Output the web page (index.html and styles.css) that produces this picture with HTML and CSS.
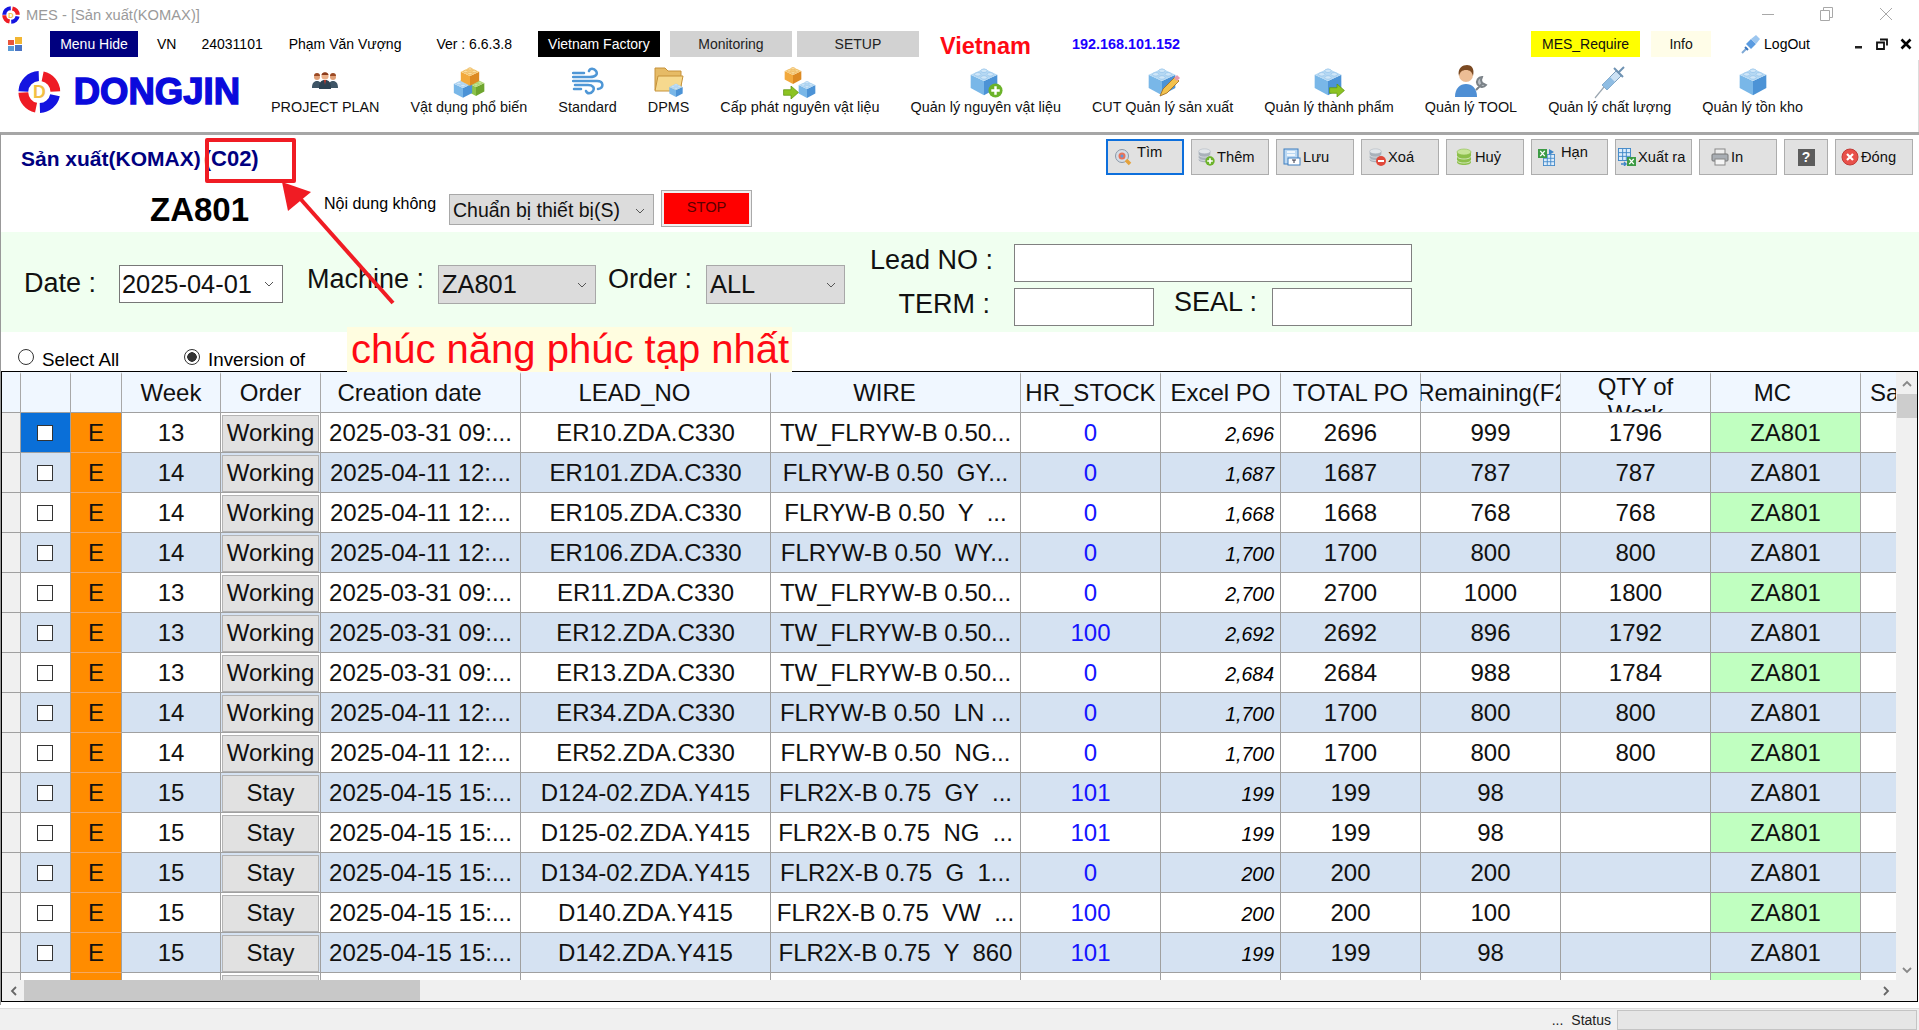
FILE: index.html
```html
<!DOCTYPE html>
<html lang="vi">
<head>
<meta charset="utf-8">
<title>MES - [Sản xuất(KOMAX)]</title>
<link rel="stylesheet" href="styles.css">
</head>
<body>
<svg class="defs" width="0" height="0" aria-hidden="true">
  <defs>
    <symbol id="blk" viewBox="0 0 36 36">
      <polygon class="bl" points="3,11 18,18 18,34 3,26"/>
      <polygon class="br" points="18,18 33,11 33,26 18,34"/>
      <polygon class="bt" points="18,4 33,11 18,18 3,11"/>
      <ellipse class="bs" cx="18" cy="6.5" rx="3.6" ry="2"/>
      <ellipse class="bs" cx="11" cy="10.5" rx="3.6" ry="2"/>
      <ellipse class="bs" cx="25" cy="10.5" rx="3.6" ry="2"/>
      <ellipse class="bs" cx="18" cy="14" rx="3.6" ry="2"/>
    </symbol>
    <symbol id="logo" viewBox="0 0 48 48">
      <path d="M6 23.4A18 18 0 0 1 23.4 6" fill="none" stroke="#1414e0" stroke-width="11"/>
      <path d="M27.7 6.4A18 18 0 0 1 42 23.4" fill="none" stroke="#ee1c25" stroke-width="11"/>
      <path d="M41.6 27.7A18 18 0 0 1 24.6 42" fill="none" stroke="#1414e0" stroke-width="11"/>
      <path d="M20.3 41.6A18 18 0 0 1 6 24.6" fill="none" stroke="#ee1c25" stroke-width="11"/>
      <text x="24" y="31" text-anchor="middle" class="logo-d">D</text>
    </symbol>
    <symbol id="cyl" viewBox="0 0 18 18">
      <path class="cb" d="M2 4v10c0 1.8 3 3 7 3s7-1.200 7-3V4z"/>
      <ellipse class="ct" cx="9" cy="4" rx="7" ry="3"/>
      <path d="M2 8c0 1.800 3 3 7 3s7-1.200 7-3M2 12c0 1.800 3 3 7 3s7-1.200 7-3" fill="none" stroke="#fff" stroke-opacity=".6"/>
    </symbol>
    <symbol id="plus" viewBox="0 0 16 16">
      <circle cx="8" cy="8" r="7.5" fill="#6cb32a"/>
      <path d="M8 3.500v9M3.500 8h9" stroke="#fff" stroke-width="2.600"/>
    </symbol>
    <symbol id="arrow" viewBox="0 0 16 14">
      <polygon points="0,4 8,4 8,0 16,7 8,14 8,10 0,10" fill="#8cc322" stroke="#5e9412" stroke-width=".8"/>
    </symbol>
    <symbol id="grid" viewBox="0 0 14 14">
      <rect x=".5" y=".5" width="13" height="13" fill="#dcecfb" stroke="#3e86c8"/>
      <path d="M5 1v12M9 1v12M1 5h12M1 9h12" stroke="#3e86c8"/>
    </symbol>
    <symbol id="xls" viewBox="0 0 12 12">
      <rect width="12" height="12" fill="#3d9b45"/>
      <path d="M3 2.500l6 7M9 2.500l-6 7" stroke="#fff" stroke-width="1.800"/>
    </symbol>
  </defs>
</svg>

<header class="titlebar">
  <svg class="title-logo" width="18" height="18"><use href="#logo"/></svg>
  <span class="title-text">MES - [Sản xuất(KOMAX)]</span>
  <div class="winctl">
    <svg width="14" height="14" viewBox="0 0 14 14"><path d="M1 7.500h12" stroke="#a8a8a8"/></svg>
    <svg width="14" height="14" viewBox="0 0 14 14"><path d="M.5 3.500h9v10h-9zM3.500 3.500v-3h9v10h-3" fill="none" stroke="#a8a8a8"/></svg>
    <svg width="14" height="14" viewBox="0 0 14 14"><path d="M1 1l12 12M13 1L1 13" stroke="#a8a8a8"/></svg>
  </div>
</header>

<nav class="menubar">
  <svg class="app-ico" width="14" height="14" viewBox="0 0 14 14">
    <rect x="0" y="3" width="6" height="5" fill="#e8543a"/><rect x="7" y="0" width="7" height="7" fill="#f2b632"/>
    <rect x="0" y="9" width="6" height="5" fill="#5b9bd5"/><rect x="7" y="8" width="7" height="6" fill="#4a74c4"/>
  </svg>
  <span class="tag tag-navy">Menu Hide</span>
  <span class="info ml19">VN</span>
  <span class="info ml25">24031101</span>
  <span class="info ml26">Phạm Văn Vượng</span>
  <span class="info ml35">Ver : 6.6.3.8</span>
  <span class="tag tag-black ml26">Vietnam Factory</span>
  <span class="tag tag-gray ml10">Monitoring</span>
  <span class="tag tag-gray ml5">SETUP</span>
  <span class="country">Vietnam</span>
  <span class="ip">192.168.101.152</span>
  <span class="tag tag-yellow">MES_Require</span>
  <span class="tag tag-cream">Info</span>
  <svg class="logout-ico" width="20" height="20" viewBox="0 0 20 20">
    <path d="M1 19l5-5" stroke="#7fa9d6" stroke-width="2"/><path d="M5 10l5-5 5 5-5 5z" fill="#5a9be0"/>
    <path d="M10 5l5-4 4 4-4 5z" fill="#9cc6ef"/><path d="M4 13l3 3" stroke="#3d78bd" stroke-width="2"/>
  </svg>
  <span class="info logout">LogOut</span>
  <div class="miniwin">
    <svg width="10" height="10" viewBox="0 0 10 10"><rect x="1" y="7" width="7" height="2.500" fill="#222"/></svg>
    <svg width="12" height="12" viewBox="0 0 12 12"><path d="M1 4.500h7v6.500H1zM4 1.500h7v6" fill="none" stroke="#111" stroke-width="1.800"/></svg>
    <svg width="12" height="12" viewBox="0 0 12 12"><path d="M1.500 1.500l9 9M10.500 1.500l-9 9" stroke="#000" stroke-width="2.600"/></svg>
  </div>
</nav>

<section class="iconbar">
  <div class="brand">
    <svg width="48" height="48"><use href="#logo"/></svg>
    <span class="brand-name">DONGJIN</span>
  </div>
  <div class="tool"><div class="tool-ico">
    <svg width="26" height="24" viewBox="0 0 26 24" class="people">
      <path d="M0 22c0-5 2-7 5-7s5 2 5 7zM16 22c0-5 2-7 5-7s5 2 5 7z" fill="#3f5566"/>
      <circle cx="5" cy="11" r="3" fill="#e0a078"/><circle cx="21" cy="11" r="3" fill="#e0a078"/>
      <path d="M7 23c0-7 2-9 6-9s6 2 6 9z" fill="#2d4252"/><path d="M12 14h2l-1 5z" fill="#c0392b"/>
      <circle cx="13" cy="10" r="3.600" fill="#eab08a"/><path d="M9.500 9a3.600 3.600 0 0 1 7 0z" fill="#8a3b1c"/>
      <path d="M2 10a3 3 0 0 1 6 0zM18 10a3 3 0 0 1 6 0z" fill="#9c4a24"/>
    </svg></div><span>PROJECT PLAN</span></div>
  <div class="tool"><div class="tool-ico">
    <svg width="34" height="34" viewBox="0 0 34 34">
      <use href="#blk" class="c-green" x="14" y="12" width="20" height="20"/>
      <use href="#blk" x="0" y="12" width="22" height="22"/>
      <use href="#blk" class="c-orange" x="7" y="0" width="22" height="22"/>
    </svg></div><span>Vật dụng phổ biến</span></div>
  <div class="tool"><div class="tool-ico">
    <svg width="32" height="32" viewBox="0 0 32 32" fill="none" stroke="#4f97d6" stroke-width="2.500" stroke-linecap="round">
      <path d="M1 11h17c6 0 8-3 6-6s-6-3-7 0"/><path d="M1 15h24c7 0 7 7 1 8"/><path d="M3 19h13c5 0 7 3 5 6s-6 3-7 0"/><path d="M1 7h11M2 23h7"/>
    </svg></div><span>Standard</span></div>
  <div class="tool"><div class="tool-ico">
    <svg width="30" height="34" viewBox="0 0 30 34">
      <path d="M1 3h10l3 3h13v19H1z" fill="#e6bb66" stroke="#c6923a"/>
      <path d="M1 26l3-15h25l-3 15z" fill="#f6d98e" stroke="#c6923a"/>
      <use href="#blk" x="14" y="17" width="16" height="16"/>
    </svg></div><span>DPMS</span></div>
  <div class="tool"><div class="tool-ico">
    <svg width="34" height="34" viewBox="0 0 34 34">
      <use href="#blk" class="c-orange" x="0" y="0" width="20" height="20"/>
      <use href="#blk" x="14" y="14" width="20" height="20"/>
      <use href="#arrow" x="0" y="21" width="16" height="13"/>
    </svg></div><span>Cấp phát nguyên vật liệu</span></div>
  <div class="tool"><div class="tool-ico">
    <svg width="36" height="34" viewBox="0 0 36 34">
      <use href="#blk" x="0" y="0" width="32" height="32"/>
      <use href="#plus" x="20" y="18" width="15" height="15"/>
    </svg></div><span>Quản lý nguyên vật liệu</span></div>
  <div class="tool"><div class="tool-ico">
    <svg width="34" height="34" viewBox="0 0 34 34">
      <use href="#blk" x="0" y="0" width="32" height="32"/>
      <path d="M14 31l3-7 12-12 4 4-12 12z" fill="#f3c24d" stroke="#a06a20" stroke-width=".8"/>
      <path d="M28 13l3-3 3 3-3 3z" fill="#e79ab0"/>
    </svg></div><span>CUT Quản lý sản xuất</span></div>
  <div class="tool"><div class="tool-ico">
    <svg width="34" height="34" viewBox="0 0 34 34">
      <use href="#blk" x="0" y="0" width="32" height="32"/>
      <use href="#arrow" x="17" y="19" width="16" height="13"/>
    </svg></div><span>Quản lý thành phẩm</span></div>
  <div class="tool"><div class="tool-ico">
    <svg width="34" height="34" viewBox="0 0 34 34">
      <path d="M1 32c0-9 5-13 11-13s11 4 11 13z" fill="#4f8fd4"/>
      <circle cx="12" cy="10" r="7" fill="#ecbd95"/><path d="M5 11C3 3 9 0 13 0s8 3 6 11c-1-4-3-6-7-6s-6 2-7 6z" fill="#7b4a22"/>
      <path d="M22 25l7-7M28 12a5 5 0 1 0 4 8l-4-2-1-3z" fill="#b9bfc5" stroke="#7b8288" stroke-width="2"/>
    </svg></div><span>Quản lý TOOL</span></div>
  <div class="tool"><div class="tool-ico">
    <svg width="32" height="34" viewBox="0 0 32 34">
      <path d="M1 33l9-11" stroke="#9aa6b0" stroke-width="1.200"/>
      <path d="M8 20L22 6l5 5-14 14z" fill="#cde2f4" stroke="#7e9fbc"/>
      <path d="M8 20l8-8 5 5-8 8z" fill="#8fbde3"/>
      <path d="M20 3l9 9M25 7l5-5" stroke="#6f93b3" stroke-width="2"/>
    </svg></div><span>Quản lý chất lượng</span></div>
  <div class="tool"><div class="tool-ico">
    <svg width="32" height="34" viewBox="0 0 32 34"><use href="#blk" x="0" y="0" width="32" height="32"/></svg>
  </div><span>Quản lý tồn kho</span></div>
</section>

<main class="content">
  <div class="top">
    <div class="top-row1">
      <h1 class="page-title">Sản xuất(KOMAX)<span class="title-code">(C02)</span></h1>
      <div class="actions">
        <button class="act act-active p7"><svg width="18" height="18" viewBox="0 0 18 18"><circle cx="8" cy="8" r="6.500" fill="#d6dde6" stroke="#8a97a6"/><circle cx="8" cy="8" r="3.500" fill="#e8735a"/><circle cx="8" cy="8" r="1.500" fill="#5a9be0"/><path d="M12 12l4 4" stroke="#e5a23b" stroke-width="3.500"/></svg><span class="up">Tìm</span></button>
        <button class="act p5"><svg width="18" height="18" viewBox="0 0 18 18"><use href="#cyl" class="c-gray" x="0" y="0" width="15" height="15"/><use href="#plus" x="8" y="8" width="10" height="10"/></svg><span>Thêm</span></button>
        <button class="act p7"><svg width="18" height="18" viewBox="0 0 18 18"><rect x="1" y="1" width="14" height="15" fill="#bcd9f3" stroke="#3e7fc0"/><path d="M4 4h8M4 7h8" stroke="#fff" stroke-width="1.500"/><rect x="5" y="10" width="12" height="7" fill="#fff" stroke="#3e7fc0"/><path d="M9 12h4M11 12v3" stroke="#334"/></svg><span>Lưu</span></button>
        <button class="act p7"><svg width="18" height="18" viewBox="0 0 18 18"><use href="#cyl" class="c-gray" x="0" y="0" width="15" height="15"/><circle cx="13" cy="13" r="5" fill="#e0483a"/><path d="M10 13h6" stroke="#fff" stroke-width="2"/></svg><span>Xoá</span></button>
        <button class="act p8"><svg width="18" height="18" viewBox="0 0 18 18"><use href="#cyl" class="c-lime" x="0" y="0" width="18" height="18"/></svg><span>Huỷ</span></button>
        <button class="act act-narrow p7"><svg width="18" height="18" viewBox="0 0 18 18"><use href="#grid" x="5" y="6" width="12" height="12"/><use href="#xls" x="0" y="1" width="9" height="9"/><path d="M11 1l5 3-5 3z" fill="#3e86c8"/></svg><span class="up">Hạn</span></button>
        <button class="act act-narrow p3"><svg width="18" height="18" viewBox="0 0 18 18"><use href="#grid" x="0" y="0" width="13" height="13"/><use href="#xls" x="9" y="9" width="9" height="9"/><path d="M3 16h5M6 14l2 2-2 2" stroke="#3e86c8" fill="none" stroke-width="1.400"/></svg><span>Xuất ra</span></button>
        <button class="act p11"><svg width="18" height="18" viewBox="0 0 18 18"><rect x="4" y="1" width="10" height="6" fill="#eee" stroke="#888"/><rect x="1" y="6" width="16" height="7" rx="1" fill="#a9aeb4" stroke="#777"/><rect x="4" y="11" width="10" height="6" fill="#f5f5f5" stroke="#888"/></svg><span>In</span></button>
        <button class="act act-help"><span class="help">?</span></button>
        <button class="act p5"><svg width="18" height="18" viewBox="0 0 18 18"><circle cx="9" cy="9" r="8" fill="#e8504a" stroke="#c23a36"/><path d="M6 6l6 6M12 6l-6 6" stroke="#fff" stroke-width="2.200"/></svg><span>Đóng</span></button>
      </div>
    </div>
    <div class="top-row2">
      <div class="machine">ZA801</div>
      <span class="nd-label">Nội dung không</span>
      <div class="sel sel-nd"><span>Chuẩn bị thiết bị(S)</span><svg class="chev" width="10" height="6" viewBox="0 0 10 6"><path d="M1 1l4 4 4-4" fill="none" stroke="#555"/></svg></div>
      <button class="stop"><span>STOP</span></button>
    </div>
  </div>

  <form class="filter">
    <div class="filter-left">
      <label class="lbl lbl-date">Date :</label>
      <div class="sel sel-date sel-white"><span>2025-04-01</span><svg class="chev" width="10" height="6" viewBox="0 0 10 6"><path d="M1 1l4 4 4-4" fill="none" stroke="#555"/></svg></div>
      <label class="lbl lbl-machine">Machine :</label>
      <div class="sel sel-machine"><span>ZA801</span><svg class="chev" width="10" height="6" viewBox="0 0 10 6"><path d="M1 1l4 4 4-4" fill="none" stroke="#555"/></svg></div>
      <label class="lbl lbl-order">Order :</label>
      <div class="sel sel-order"><span>ALL</span><svg class="chev" width="10" height="6" viewBox="0 0 10 6"><path d="M1 1l4 4 4-4" fill="none" stroke="#555"/></svg></div>
    </div>
    <div class="filter-right">
      <div class="fr-row">
        <label class="lbl lbl-right">Lead NO :</label>
        <input class="txt txt-lead" type="text">
      </div>
      <div class="fr-row fr-row2">
        <label class="lbl lbl-right">TERM :</label>
        <input class="txt txt-short" type="text">
        <label class="lbl lbl-seal">SEAL :</label>
        <input class="txt txt-short" type="text">
      </div>
    </div>
  </form>

  <div class="radios">
    <label class="radio r-all"><input type="radio" name="pick"><span>Select All</span></label>
    <label class="radio r-inv"><input type="radio" name="pick" checked><span>Inversion of</span></label>
  </div>

  <div class="gridbox">
    <div class="viewport">
      <table class="grid">
        <colgroup>
          <col class="w-rh"><col class="w-ck"><col class="w-e"><col class="w-week"><col class="w-order"><col class="w-date"><col class="w-lead"><col class="w-wire"><col class="w-hr"><col class="w-xl"><col class="w-total"><col class="w-rem"><col class="w-qty"><col class="w-mc"><col class="w-sa">
        </colgroup>
        <thead>
          <tr>
            <th></th><th></th><th></th>
            <th><div class="hc">Week</div></th>
            <th><div class="hc">Order</div></th>
            <th><div class="hc hc-shift">Creation date</div></th>
            <th><div class="hc hc-shift">LEAD_NO</div></th>
            <th><div class="hc hc-shift">WIRE</div></th>
            <th><div class="hc">HR_STOCK</div></th>
            <th><div class="hc">Excel PO</div></th>
            <th><div class="hc">TOTAL PO</div></th>
            <th><div class="hc hc-rem">Remaining(F2)</div></th>
            <th><div class="hc hc-wrap">QTY of Work</div></th>
            <th><div class="hc hc-mc">MC</div></th>
            <th><div class="hc hc-sa">Sa</div></th>
          </tr>
        </thead>
        <tbody>
          <tr><td class="rh"></td><td class="ck ck-sel"><input type="checkbox"></td><td class="e">E</td><td>13</td><td class="o"><button>Working</button></td><td>2025-03-31 09:...</td><td>ER10.ZDA.C330</td><td class="w">TW_FLRYW-B 0.50...</td><td class="hr">0</td><td class="xl">2,696</td><td>2696</td><td>999</td><td>1796</td><td class="mc">ZA801</td><td></td></tr>
          <tr><td class="rh"></td><td class="ck"><input type="checkbox"></td><td class="e">E</td><td>14</td><td class="o"><button>Working</button></td><td>2025-04-11 12:...</td><td>ER101.ZDA.C330</td><td class="w">FLRYW-B 0.50  GY...</td><td class="hr">0</td><td class="xl">1,687</td><td>1687</td><td>787</td><td>787</td><td class="mc">ZA801</td><td></td></tr>
          <tr><td class="rh"></td><td class="ck"><input type="checkbox"></td><td class="e">E</td><td>14</td><td class="o"><button>Working</button></td><td>2025-04-11 12:...</td><td>ER105.ZDA.C330</td><td class="w">FLRYW-B 0.50  Y  ...</td><td class="hr">0</td><td class="xl">1,668</td><td>1668</td><td>768</td><td>768</td><td class="mc">ZA801</td><td></td></tr>
          <tr><td class="rh"></td><td class="ck"><input type="checkbox"></td><td class="e">E</td><td>14</td><td class="o"><button>Working</button></td><td>2025-04-11 12:...</td><td>ER106.ZDA.C330</td><td class="w">FLRYW-B 0.50  WY...</td><td class="hr">0</td><td class="xl">1,700</td><td>1700</td><td>800</td><td>800</td><td class="mc">ZA801</td><td></td></tr>
          <tr><td class="rh"></td><td class="ck"><input type="checkbox"></td><td class="e">E</td><td>13</td><td class="o"><button>Working</button></td><td>2025-03-31 09:...</td><td>ER11.ZDA.C330</td><td class="w">TW_FLRYW-B 0.50...</td><td class="hr">0</td><td class="xl">2,700</td><td>2700</td><td>1000</td><td>1800</td><td class="mc">ZA801</td><td></td></tr>
          <tr><td class="rh"></td><td class="ck"><input type="checkbox"></td><td class="e">E</td><td>13</td><td class="o"><button>Working</button></td><td>2025-03-31 09:...</td><td>ER12.ZDA.C330</td><td class="w">TW_FLRYW-B 0.50...</td><td class="hr">100</td><td class="xl">2,692</td><td>2692</td><td>896</td><td>1792</td><td class="mc">ZA801</td><td></td></tr>
          <tr><td class="rh"></td><td class="ck"><input type="checkbox"></td><td class="e">E</td><td>13</td><td class="o"><button>Working</button></td><td>2025-03-31 09:...</td><td>ER13.ZDA.C330</td><td class="w">TW_FLRYW-B 0.50...</td><td class="hr">0</td><td class="xl">2,684</td><td>2684</td><td>988</td><td>1784</td><td class="mc">ZA801</td><td></td></tr>
          <tr><td class="rh"></td><td class="ck"><input type="checkbox"></td><td class="e">E</td><td>14</td><td class="o"><button>Working</button></td><td>2025-04-11 12:...</td><td>ER34.ZDA.C330</td><td class="w">FLRYW-B 0.50  LN ...</td><td class="hr">0</td><td class="xl">1,700</td><td>1700</td><td>800</td><td>800</td><td class="mc">ZA801</td><td></td></tr>
          <tr><td class="rh"></td><td class="ck"><input type="checkbox"></td><td class="e">E</td><td>14</td><td class="o"><button>Working</button></td><td>2025-04-11 12:...</td><td>ER52.ZDA.C330</td><td class="w">FLRYW-B 0.50  NG...</td><td class="hr">0</td><td class="xl">1,700</td><td>1700</td><td>800</td><td>800</td><td class="mc">ZA801</td><td></td></tr>
          <tr><td class="rh"></td><td class="ck"><input type="checkbox"></td><td class="e">E</td><td>15</td><td class="o"><button>Stay</button></td><td>2025-04-15 15:...</td><td>D124-02.ZDA.Y415</td><td class="w">FLR2X-B 0.75  GY  ...</td><td class="hr">101</td><td class="xl">199</td><td>199</td><td>98</td><td></td><td class="mc">ZA801</td><td></td></tr>
          <tr><td class="rh"></td><td class="ck"><input type="checkbox"></td><td class="e">E</td><td>15</td><td class="o"><button>Stay</button></td><td>2025-04-15 15:...</td><td>D125-02.ZDA.Y415</td><td class="w">FLR2X-B 0.75  NG  ...</td><td class="hr">101</td><td class="xl">199</td><td>199</td><td>98</td><td></td><td class="mc">ZA801</td><td></td></tr>
          <tr><td class="rh"></td><td class="ck"><input type="checkbox"></td><td class="e">E</td><td>15</td><td class="o"><button>Stay</button></td><td>2025-04-15 15:...</td><td>D134-02.ZDA.Y415</td><td class="w">FLR2X-B 0.75  G  1...</td><td class="hr">0</td><td class="xl">200</td><td>200</td><td>200</td><td></td><td class="mc">ZA801</td><td></td></tr>
          <tr><td class="rh"></td><td class="ck"><input type="checkbox"></td><td class="e">E</td><td>15</td><td class="o"><button>Stay</button></td><td>2025-04-15 15:...</td><td>D140.ZDA.Y415</td><td class="w">FLR2X-B 0.75  VW  ...</td><td class="hr">100</td><td class="xl">200</td><td>200</td><td>100</td><td></td><td class="mc">ZA801</td><td></td></tr>
          <tr><td class="rh"></td><td class="ck"><input type="checkbox"></td><td class="e">E</td><td>15</td><td class="o"><button>Stay</button></td><td>2025-04-15 15:...</td><td>D142.ZDA.Y415</td><td class="w">FLR2X-B 0.75  Y  860</td><td class="hr">101</td><td class="xl">199</td><td>199</td><td>98</td><td></td><td class="mc">ZA801</td><td></td></tr>
          <tr><td class="rh"></td><td class="ck"></td><td class="e"></td><td></td><td class="o"><button></button></td><td></td><td></td><td></td><td></td><td></td><td></td><td></td><td></td><td class="mc"></td><td></td></tr>
        </tbody>
      </table>
    </div>
    <div class="vscroll">
      <svg width="12" height="8" viewBox="0 0 12 8"><path d="M2 6l4-4 4 4" fill="none" stroke="#888" stroke-width="1.800"/></svg>
      <div class="vthumb"></div>
      <svg class="v-down" width="12" height="8" viewBox="0 0 12 8"><path d="M2 2l4 4 4-4" fill="none" stroke="#888" stroke-width="1.800"/></svg>
    </div>
    <div class="hscroll">
      <svg class="h-left" width="8" height="12" viewBox="0 0 8 12"><path d="M6 2L2 6l4 4" fill="none" stroke="#666" stroke-width="1.800"/></svg>
      <div class="hthumb"></div>
      <svg class="h-right" width="8" height="12" viewBox="0 0 8 12"><path d="M2 2l4 4-4 4" fill="none" stroke="#666" stroke-width="1.800"/></svg>
    </div>
    <div class="corner"></div>
  </div>
</main>

<footer class="statusbar">
  <span class="st-dots">...</span>
  <span class="st-label">Status</span>
  <div class="st-box"></div>
</footer>

<div class="note-box"></div>
<svg class="note-arrow" width="130" height="130" viewBox="0 0 130 130">
  <path d="M113 121L17 13" fill="none" stroke="#f01c24" stroke-width="4"/>
  <polygon points="2,0 31,10 8,29" fill="#f01c24"/>
</svg>
<div class="note-text">chúc năng phúc tạp nhất</div>
</body>
</html>
```

FILE: styles.css
```css
* { box-sizing: border-box; }
html, body { margin: 0; padding: 0; }
body {
  position: relative;
  width: 1919px;
  height: 1030px;
  overflow: hidden;
  display: flex;
  flex-direction: column;
  background: #fff;
  color: #000;
  font-family: "Liberation Sans", Arial, sans-serif;
  font-size: 14px;
}
.defs { position: absolute; }
button, input { font-family: inherit; }

/* svg symbol parts */
.bl { fill: var(--l, #79b7e8); }
.br { fill: var(--r, #4c93d6); }
.bt { fill: var(--t, #b5d8f3); }
.bs { fill: var(--s, #cfe6f8); stroke: var(--k, #8fc0e8); stroke-width: .7; }
.c-orange { --l: #f2a93c; --r: #dd8a22; --t: #f8cf7e; --s: #fbdd9e; --k: #e0a040; }
.c-green { --l: #8cc34a; --r: #6ea52e; --t: #b9dc82; --s: #cde8a4; --k: #8cc34a; }
.cb { fill: var(--cb, #aeb6bf); }
.ct { fill: var(--ct, #dde2e7); stroke: var(--cb, #aeb6bf); stroke-width: .6; }
.c-gray { --cb: #a9b1ba; --ct: #e2e6ea; }
.c-lime { --cb: #8cbf4a; --ct: #c8e59a; }
.logo-d { font: bold 20px "Liberation Sans", Arial, sans-serif; fill: #f2bf45; }

/* title bar */
.titlebar { height: 31px; flex: none; display: flex; align-items: flex-start; padding: 6px 0 0 2px; }
.title-logo { flex: none; }
.title-text { margin-left: 6px; font-size: 14.7px; line-height: 18px; color: #9a9a9a; }
.winctl { margin-left: auto; margin-right: 26px; display: flex; gap: 45px; padding-top: 1px; }

/* menu bar */
.menubar { height: 29px; flex: none; display: flex; align-items: flex-start; padding-left: 8px; }
.app-ico { margin: 6px 28px 0 0; flex: none; }
.tag { height: 26px; line-height: 26px; text-align: center; flex: none; color: #111; }
.tag-navy { width: 88px; background: #00007f; color: #fff; }
.tag-black { width: 122px; background: #000; color: #fff; }
.tag-gray { width: 122px; background: #d2d2d2; color: #222; }
.tag-yellow { width: 109px; background: #ffff00; margin-left: auto; }
.tag-cream { width: 60px; background: #fffde8; margin-left: 11px; }
.info { line-height: 26px; flex: none; }
.ml5 { margin-left: 5px; } .ml10 { margin-left: 10px; } .ml19 { margin-left: 19px; }
.ml25 { margin-left: 25px; } .ml26 { margin-left: 26px; } .ml35 { margin-left: 35px; }
.country { margin-left: 21px; font-size: 23.5px; font-weight: bold; color: #ff0a14; line-height: 30px; flex: none; }
.ip { margin-left: 41px; font-size: 14.4px; font-weight: bold; color: #1a00ff; line-height: 26px; flex: none; }
.logout-ico { margin: 3px 0 0 30px; flex: none; }
.logout { margin-left: 3px; }
.miniwin { display: flex; align-items: center; gap: 12px; margin: 7px 7px 0 44px; }

/* big icons */
.iconbar { height: 72px; flex: none; display: flex; gap: 31px; padding: 5px 0 0 18px; border-right: 1px solid #ddd; font-size: 14.4px; }
.brand { width: 222px; flex: none; display: flex; align-items: center; align-self: flex-start; height: 48px; gap: 13px; margin-top: 3px; }
.brand-name { font-size: 36.5px; font-weight: bold; color: #0a0adc; -webkit-text-stroke: 1.4px #0a0adc; line-height: 40px; }
.tool { display: flex; flex-direction: column; align-items: center; white-space: nowrap; color: #111; }
.tool-ico { height: 34px; display: flex; align-items: center; justify-content: center; }
.people { margin-top: -8px; }
.tool > span { line-height: 17px; }

/* page */
.content { flex: none; height: 873px; display: flex; flex-direction: column; border-top: 3px solid #a6a6a6; border-left: 1px solid #999; }
.top { height: 97px; flex: none; }
.top-row1 { display: flex; justify-content: space-between; padding-top: 4px; height: 55px; }
.page-title { margin: 4px 0 0 20px; font-size: 21px; line-height: 32px; font-weight: bold; color: #000080; white-space: nowrap; }
.title-code { font-size: 22px; margin-left: 3px; }
.actions { display: flex; gap: 7px; height: 36px; padding-right: 6px; }
.act { width: 78px; height: 36px; background: #e1e1e1; border: 1px solid #adadad; padding: 0; display: flex; align-items: center; gap: 2px; font-size: 14.7px; color: #111; }
.act svg { flex: none; }
.act-narrow { width: 77px; }
.act-active { border: 2px solid #0d6fdc; }
.act-help { width: 44px; justify-content: center; }
.help { width: 17px; height: 17px; background: #5c5c5c; color: #fff; font-weight: bold; font-size: 14px; line-height: 17px; text-align: center; }
.up { margin-bottom: 10px; margin-left: 3px; }
.p3 { padding-left: 2px; } .p5 { padding-left: 5px; } .p7 { padding-left: 6px; } .p8 { padding-left: 8px; } .p11 { padding-left: 11px; }
.top-row2 { display: flex; align-items: flex-start; height: 42px; }
.machine { width: 323px; padding-left: 149px; font-size: 33px; font-weight: bold; line-height: 40px; }
.nd-label { font-size: 16px; line-height: 20px; margin-top: 4px; width: 125px; white-space: nowrap; }
.sel { display: flex; align-items: center; justify-content: space-between; background: #dcdcdc; border: 1px solid #a8a8a8; padding: 0 8px 0 3px; flex: none; font-size: 25.4px; color: #111; }
.sel-white { background: #fff; border-color: #777; padding-left: 2px; }
.sel-nd { width: 205px; height: 31px; font-size: 19.5px; margin-top: 4px; padding-top: 2px; }
.stop { width: 91px; height: 37px; margin: 0 0 0 7px; padding: 0; border: 1px solid #aaa; background: #f0f0f0; display: flex; }
.stop span { margin: 2px; flex: 1; background: #ff0000; color: #5a0000; font-size: 14.7px; line-height: 29px; }

/* filter */
.filter { height: 100px; flex: none; background: #f0fff0; display: flex; }
.filter-left { display: flex; align-items: flex-start; padding: 33px 0 0 23px; width: 869px; flex: none; }
.lbl { font-size: 27px; line-height: 32px; white-space: nowrap; color: #111; }
.lbl-date { width: 95px; margin-top: 2px; }
.lbl-machine { width: 132px; margin-left: 24px; margin-top: -2px; }
.lbl-order { width: 98px; margin-left: 12px; margin-top: -2px; }
.sel-date { width: 164px; height: 38px; }
.sel-machine { width: 158px; height: 39px; margin-left: -1px; }
.sel-order { width: 139px; height: 39px; }
.filter-right { padding-top: 12px; }
.fr-row { display: flex; align-items: center; height: 38px; }
.fr-row2 { margin-top: 6px; }
.fr-row > .lbl-right { width: 144px; text-align: right; padding-right: 24px; margin-bottom: 6px; }
.lbl-seal { width: 118px; padding-left: 20px; margin-bottom: 10px; }
.txt { height: 38px; border: 1px solid #808080; background: #fff; margin: 0; padding: 0; }
.txt-lead { width: 398px; }
.txt-short { width: 140px; }

/* radios */
.radios { height: 39px; flex: none; display: flex; overflow: hidden; font-size: 18.8px; }
.radio { display: flex; align-items: center; gap: 8px; height: 22px; margin-top: 17px; white-space: nowrap; }
.radio input { appearance: none; width: 16px; height: 16px; border: 1px solid #333; border-radius: 50%; margin: -6px 0 0; background: #fff; }
.radio input:checked { background: radial-gradient(circle, #333 0 4.5px, #fff 5px); }
.r-all { margin-left: 17px; width: 166px; }

/* data grid */
.gridbox { width: 1917px; height: 631px; flex: none; border: 1px solid #000; display: grid; grid-template-columns: 1894px 1fr; grid-template-rows: 608px 1fr; background: #f0f0f0; }
.viewport { overflow: hidden; background: #fff; }
.grid { border-collapse: separate; border-spacing: 0; table-layout: fixed; width: 1960px; font-size: 24px; }
.w-rh { width: 19px; } .w-ck { width: 50px; } .w-e { width: 51px; } .w-week { width: 99px; } .w-order { width: 100px; }
.w-date { width: 200px; } .w-lead { width: 250px; } .w-wire { width: 250px; } .w-hr { width: 140px; } .w-xl { width: 120px; }
.w-total { width: 140px; } .w-rem { width: 140px; } .w-qty { width: 150px; } .w-mc { width: 150px; } .w-sa { width: 101px; }
.grid th { height: 41px; padding: 0; font-weight: normal; background: #f0f7ff; border-right: 1px solid #a8a8a8; border-bottom: 1px solid #a0a0a0; border-top: 2px solid #f0f7ff; overflow: hidden; }
.hc { height: 38px; display: flex; align-items: center; justify-content: center; white-space: nowrap; overflow: hidden; color: #111; }
.hc-shift { padding-right: 22px; }
.hc-rem { padding-left: 12px; }
.hc-wrap { white-space: normal; display: block; text-align: center; line-height: 27px; margin-top: -1px; height: 39px; padding: 0 30px; }
.hc-mc { padding-right: 26px; }
.hc-sa { justify-content: flex-start; padding-left: 9px; }
.grid td { height: 40px; padding: 0; text-align: center; white-space: pre; overflow: hidden; border-right: 1px solid #a0a0a0; border-bottom: 1px solid #a0a0a0; color: #111; }
.grid tbody tr:nth-child(even) td { background: #d5e2f2; }
.grid tbody tr:nth-child(odd) td.mc { background: #c0ffc0; }
.grid tbody tr:nth-child(n) td.rh { background: #f0f0f0; }
.grid tbody tr:nth-child(n) td.e { background: #ff8c00; border-bottom-color: #f4a860; }
.grid tbody tr:nth-child(n) td.ck-sel { background: #0a6fd8; }
.ck input { appearance: none; display: block; width: 16px; height: 16px; margin: 0 auto 0 16px; background: #fff; border: 1px solid #333; }
.o button { display: block; width: 97px; height: 37px; margin: 1px 0 0 1px; padding: 0; background: #e1e1e1; border: 1px solid #b4b4b4; font-size: 24px; color: #111; }
.grid td.hr { color: #1414ff; }
.grid td.xl { text-align: right; font-style: italic; font-size: 19.5px; padding: 3px 6px 0 0; color: #000; }

/* scrollbars */
.vscroll { display: flex; flex-direction: column; align-items: center; padding-top: 8px; background: #f0f0f0; grid-row: 1; grid-column: 2; }
.vthumb { width: 20px; height: 24px; background: #cdcdcd; margin-top: 6px; }
.v-down { margin-top: auto; margin-bottom: 6px; }
.hscroll { grid-row: 2; grid-column: 1; display: flex; align-items: center; background: #f0f0f0; padding-left: 8px; }
.hthumb { width: 396px; height: 100%; background: #c8c8c8; margin-left: 6px; }
.h-right { margin-left: auto; margin-right: 6px; }
.corner { background: #f0f0f0; }

/* status */
.statusbar { flex: 1; background: #f0f0f0; border-top: 1px solid #dcdcdc; margin-top: 3px; display: flex; align-items: center; justify-content: flex-end; padding: 0 2px 0 0; font-size: 14px; color: #222; }
.st-dots { margin-right: 8px; }
.st-box { width: 300px; height: 20px; background: #e6e6e6; border: 1px solid #c4c4c4; margin-left: 6px; }

/* hand-drawn annotation lying over the screen */
.note-box { position: absolute; left: 205px; top: 138px; width: 91px; height: 45px; border: 4px solid #f01c24; border-radius: 2px; }
.note-arrow { position: absolute; left: 280px; top: 182px; }
.note-text { position: absolute; left: 347px; top: 327px; width: 445px; height: 45px; background: #fffde0; color: #ff0a14; font-size: 40px; line-height: 44px; padding-left: 4px; white-space: nowrap; }
```
